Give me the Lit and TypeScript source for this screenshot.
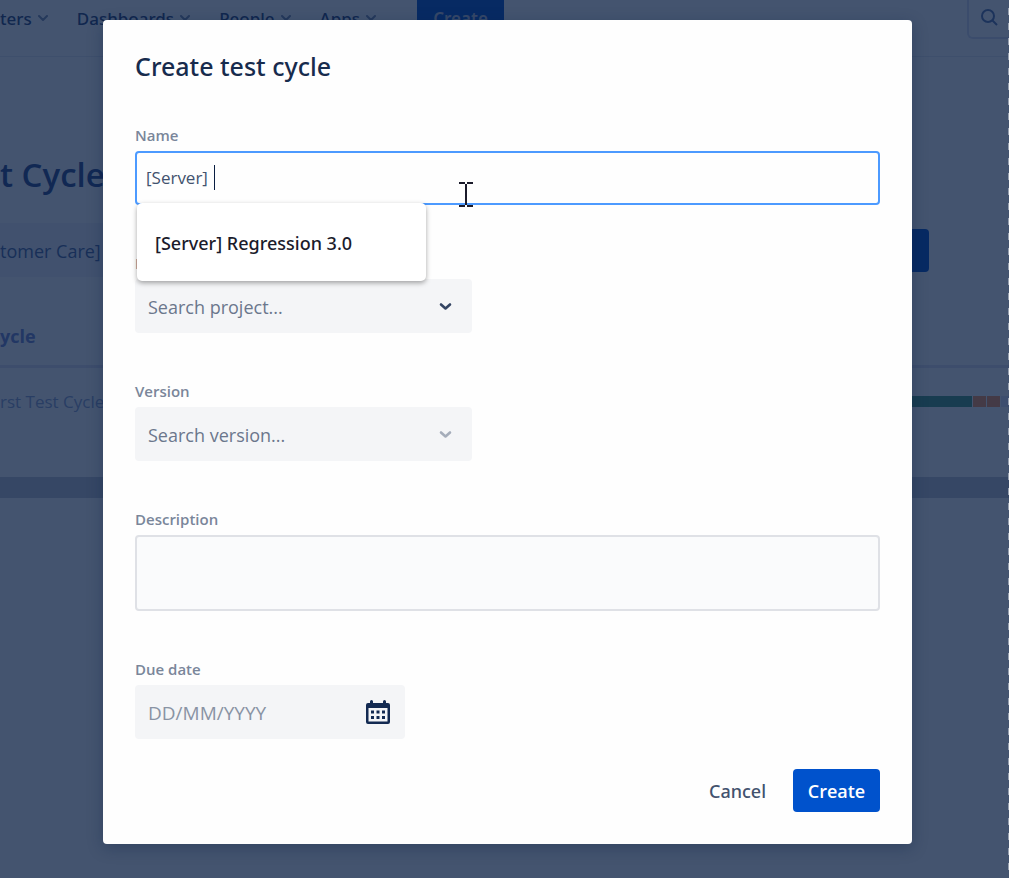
import { LitElement, html, css, svg } from "lit";
import { customElement, property } from "lit/decorators.js";

const chevron = svg`<path d="M2 2l4 4 4-4" fill="none" stroke="currentColor" stroke-width="2" stroke-linecap="round" stroke-linejoin="round"/>`;

@customElement("backdrop-page")
class BackdropPage extends LitElement {
  @property({ attribute: false }) menu = ["ters", "Dashboards", "People", "Apps"];

  static styles = css`
    :host {
      display: block;
      min-height: 100vh;
      background: #fff;
      color: #2a4377;
    }
    * {
      box-sizing: border-box;
    }
    nav {
      display: flex;
      align-items: flex-start;
      height: 57px;
      border-bottom: 1px solid #e6e9f2;
      font-family: "Noto Sans", "Open Sans", sans-serif;
      font-size: 17px;
      font-weight: 500;
    }
    .item {
      display: flex;
      align-items: center;
      gap: 5px;
      height: 36px;
      margin-right: 28px;
      color: inherit;
      text-decoration: none;
    }
    .item svg {
      width: 12px;
      height: 8px;
      opacity: 0.6;
    }
    .create {
      width: 87px;
      height: 39px;
      padding: 0 0 3px;
      margin-left: 12px;
      border: 0;
      border-radius: 0 0 3px 3px;
      background: #0052cc;
      color: #c4cce0;
      font: inherit;
      font-weight: 600;
    }
    .search {
      display: grid;
      place-items: center start;
      width: 42px;
      height: 39px;
      margin-left: auto;
      padding: 0 0 3px 11px;
      border: 2px solid #d8def0;
      border-width: 0 0 2px 2px;
      border-radius: 0 0 0 6px;
      background: none;
      color: #5874ad;
    }
    h1 {
      margin: 92px 0 0;
      font-size: 33px;
      line-height: 52px;
      font-weight: 600;
      color: #2a4a8c;
    }
    .filter {
      display: flex;
      align-items: center;
      justify-content: space-between;
      height: 54px;
      margin: 22px 80px 0 0;
      font-size: 18px;
      color: #4a67a0;
    }
    .filter span {
      flex: 0 1 300px;
      padding-top: 2px;
      line-height: 52px;
      background: #f1f3fa;
    }
    .filter button {
      width: 100px;
      height: 43px;
      border: 0;
      border-radius: 4px;
      background: #0052cc;
    }
    table {
      width: 100%;
      margin-top: 31px;
      border-collapse: collapse;
      text-align: left;
    }
    th,
    td {
      padding: 0;
    }
    th {
      height: 58px;
      border-bottom: 3px solid #dfe3f0;
      font-size: 18px;
      font-weight: 700;
      color: #7085d0;
    }
    td {
      height: 70px;
      font-size: 17px;
      color: #8ea3d0;
    }
    .progress {
      display: flex;
      gap: 1px;
      height: 11px;
      margin-left: auto;
      width: 240px;
    }
    .pass {
      flex: 1;
      background: #479a7e;
    }
    .fail {
      width: 13px;
      background: #ff9253;
    }
    .rest {
      width: 8px;
      background: #e0e6fa;
    }
    hr {
      height: 21px;
      margin: 41px 0 0;
      border: 0;
      background: #c3c9d4;
    }
  `;

  render() {
    return html`
      <nav>
        ${this.menu.map(
          (m) => html`<a class="item" href="#">${m}<svg viewBox="0 0 12 8">${chevron}</svg></a>`
        )}
        <button class="create">Create</button>
        <button class="search" aria-label="Search">
          <svg width="18" height="18" viewBox="0 0 18 18" fill="none" stroke="currentColor" stroke-width="2">
            <circle cx="8" cy="8" r="6" />
            <path d="M12.5 12.5L17 17" />
          </svg>
        </button>
      </nav>
      <h1>t Cycles</h1>
      <div class="filter"><span>tomer Care]</span><button aria-label="New cycle"></button></div>
      <table>
        <thead>
          <tr><th>ycle</th><th></th></tr>
        </thead>
        <tbody>
          <tr>
            <td>rst Test Cycle</td>
            <td>
              <div class="progress">
                <div class="pass"></div>
                <div class="fail"></div>
                <div class="fail"></div>
                <div class="rest"></div>
              </div>
            </td>
          </tr>
        </tbody>
      </table>
      <hr />
    `;
  }
}

@customElement("cycle-dialog")
class CycleDialog extends LitElement {
  static styles = css`
    :host {
      display: block;
      padding: 32px;
      border-radius: 4px;
      background: #fefefe;
      box-shadow: 0 4px 16px rgba(9, 30, 66, 0.3);
      color: #172b4d;
    }
    * {
      box-sizing: border-box;
    }
    h2 {
      margin: 0 0 45px;
      font-family: "Noto Sans", "Open Sans", sans-serif;
      font-size: 25px;
      line-height: 28px;
      font-weight: 500;
    }
    form {
      display: flex;
      flex-direction: column;
      gap: 48px;
    }
    .field {
      display: flex;
      flex-direction: column;
      gap: 6px;
    }
    label {
      font-size: 15px;
      line-height: 20px;
      font-weight: 600;
      color: #7a869a;
    }
    .box {
      position: relative;
      display: flex;
    }
    .half {
      width: 337px;
    }
    .date {
      width: 270px;
    }
    input,
    select,
    textarea {
      flex: 1;
      min-width: 0;
      height: 54px;
      margin: 0;
      padding: 2px 13px 0;
      border: 0;
      border-radius: 4px;
      outline: 0;
      appearance: none;
      background: #f4f5f7;
      font: inherit;
      font-size: 18px;
      color: #6b778c;
    }
    #due {
      font-size: 19px;
    }
    input::placeholder {
      color: #8993a4;
      opacity: 1;
    }
    .name {
      padding: 0 9px 2px;
      border: 2px solid #4c9aff;
      background: #fefefe;
      font-size: 17px;
      color: #42526e;
    }
    textarea {
      height: 76px;
      border: 2px solid #dfe1e6;
      background: #fafbfc;
      resize: none;
    }
    .arrow {
      position: absolute;
      right: 20px;
      top: 23px;
      width: 13px;
      height: 9px;
      color: #344563;
      pointer-events: none;
    }
    .arrow.off {
      color: #a5adba;
    }
    .caret {
      position: absolute;
      left: 79px;
      top: 14px;
      width: 1px;
      height: 25px;
      background: #091e42;
    }
    .pointer {
      position: absolute;
      left: 324px;
      top: 31px;
      z-index: 2;
    }
    .suggest {
      position: absolute;
      z-index: 1;
      left: 2px;
      top: 52px;
      width: 289px;
      margin: 0;
      padding: 2px 0 0;
      list-style: none;
      border-radius: 5px;
      background: #fff;
      box-shadow: 0 2px 5px rgba(0, 0, 0, 0.35);
      font-family: "Noto Sans", "Open Sans", sans-serif;
      font-size: 18px;
      line-height: 76px;
      font-weight: 500;
      color: #1b1b2b;
      text-indent: 18px;
    }
    .calendar {
      position: absolute;
      right: 14px;
      top: 14px;
      padding: 0;
      border: 0;
      background: none;
      color: #132a52;
      line-height: 0;
    }
    footer {
      display: flex;
      justify-content: flex-end;
      gap: 11px;
      margin-top: -18px;
    }
    footer button {
      height: 43px;
      padding: 0 16px;
      border: 0;
      border-radius: 4px;
      background: none;
      font-family: "Noto Sans", "Open Sans", sans-serif;
      font-size: 18px;
      font-weight: 500;
      color: #42526e;
    }
    footer .primary {
      width: 87px;
      padding: 0;
      background: #0052cc;
      color: #fff;
      font-family: "Open Sans", "Noto Sans", sans-serif;
      font-weight: 600;
    }
  `;

  select(id: string, label: string, text: string, off = false) {
    return html`
      <div class="field half">
        <label for=${id}>${label}</label>
        <div class="box">
          <select id=${id}><option>${text}</option></select>
          <svg class="arrow ${off ? "off" : ""}" viewBox="0 0 13 9">
            <path d="M2 2.500l4.500 4L11 2.500" fill="none" stroke="currentColor" stroke-width="2.600" stroke-linecap="round" stroke-linejoin="round" />
          </svg>
        </div>
      </div>
    `;
  }

  render() {
    return html`
      <h2>Create test cycle</h2>
      <form>
        <div class="field">
          <label for="name">Name</label>
          <div class="box">
            <input class="name" id="name" type="text" value="[Server] " autocomplete="off" />
            <span class="caret"></span>
            <ul class="suggest">
              <li>[Server] Regression 3.0</li>
            </ul>
            <svg class="pointer" width="14" height="25" viewBox="0 0 14 25" fill="none" stroke="#1b1b2b" stroke-width="2">
              <path d="M0 1h6M8 1h6M7 2v21M0 24h6M8 24h6" />
            </svg>
          </div>
        </div>
        ${this.select("project", "Project", "Search project...")}
        ${this.select("version", "Version", "Search version...", true)}
        <div class="field">
          <label for="description">Description</label>
          <div class="box"><textarea id="description"></textarea></div>
        </div>
        <div class="field date">
          <label for="due">Due date</label>
          <div class="box">
            <input id="due" type="text" placeholder="DD/MM/YYYY" />
            <button class="calendar" type="button" aria-label="Open calendar">
              <svg width="26" height="26" viewBox="0 0 26 26" fill="currentColor">
                <path fill-rule="evenodd" d="M5 2.500a1.500 1.500 0 0 1 3 0V4h10V2.500a1.500 1.500 0 0 1 3 0V4h2a2 2 0 0 1 2 2v17a2 2 0 0 1-2 2H3a2 2 0 0 1-2-2V6a2 2 0 0 1 2-2h2zM3.500 9v13.500h19V9z" />
                <path d="M6 11.500h3v3H6zM11.500 11.500h3v3h-3zM17 11.500h3v3h-3zM6 17h3v3H6zM11.500 17h3v3h-3zM17 17h3v3h-3z" />
              </svg>
            </button>
          </div>
        </div>
        <footer>
          <button type="button">Cancel</button>
          <button class="primary" type="button">Create</button>
        </footer>
      </form>
    `;
  }
}

@customElement("app-root")
class AppRoot extends LitElement {
  static styles = css`
    :host {
      display: grid;
      min-height: 100vh;
      overflow: hidden;
      font-family: "Open Sans", "Noto Sans", sans-serif;
    }
    backdrop-page,
    .veil {
      grid-area: 1 / 1;
      min-width: 0;
    }
    .veil {
      position: relative;
      padding: 20px 97px 34px 103px;
      background:
        repeating-linear-gradient(transparent 0 8px, #98a1b0 8px 15px) right / 1px 100% no-repeat,
        rgba(9, 30, 66, 0.76);
    }
  `;

  render() {
    return html`
      <backdrop-page></backdrop-page>
      <div class="veil">
        <cycle-dialog role="dialog" aria-label="Create test cycle"></cycle-dialog>
      </div>
    `;
  }
}
